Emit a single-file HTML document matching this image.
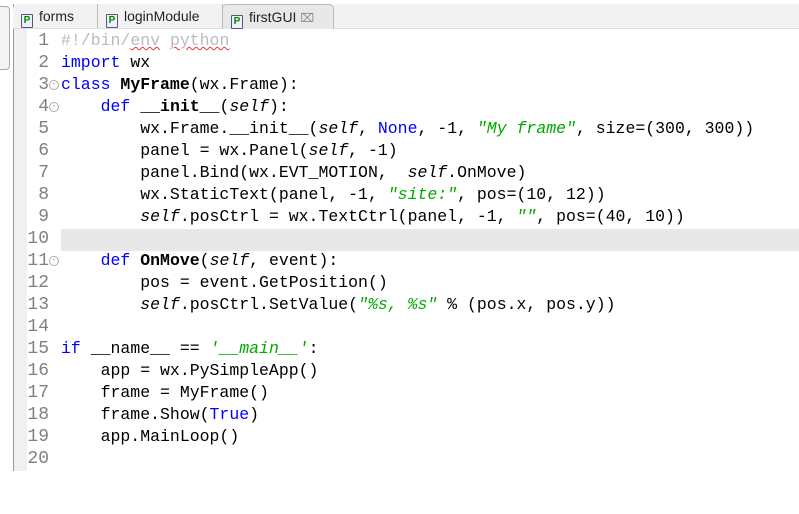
<!DOCTYPE html><html><head><style>
body{margin:0;width:799px;height:471px;background:#fff;overflow:hidden;position:relative;font-family:"Liberation Sans",sans-serif}
.lp{position:absolute;left:-4px;top:6px;width:12px;height:62px;border:1px solid #aaa;border-radius:4px;background:#f4f4f4}
.frame{position:absolute;left:13px;top:4px;right:0;bottom:0;border-left:1px solid #999;background:#fff}
.tabs{position:absolute;left:13px;top:4px;right:0;height:24px;background:#f2f2f2;border-bottom:1px solid #ddd;border-top-left-radius:5px}
.tab{position:absolute;top:0;height:24px;font-size:14px;line-height:25px;color:#222;border-right:1px solid #bbb}
.tab i{display:inline-block;width:10px;height:12px;border:1px solid #557;border-radius:1px;font-style:normal;font-size:10px;line-height:12px;text-align:center;color:#080;font-weight:bold;margin:0 6px 0 8px;vertical-align:-2px;background:#eef}
.act{background:#e8e8e8;border:1px solid #bbb;border-bottom:none;border-radius:5px 5px 0 0}
.gut{position:absolute;left:14px;top:29px;width:13px;bottom:0;background:#f0f0f0}
.code{position:absolute;left:0;top:30px;font-family:"Liberation Mono",monospace;font-size:16.5px;line-height:22px;white-space:pre;color:#000}
.ln{position:absolute;left:26px;width:23px;text-align:right;color:#808080;font-size:18px}
.c{position:absolute;left:61px}
.hl{position:absolute;left:61px;right:0;top:229px;height:22px;background:#e8e8e8}
.k{color:#00f}.b{font-weight:bold}.s{color:#00aa00;font-style:italic}.self{font-style:italic}.cm{color:#bbb}
.sq{text-decoration:underline wavy #e33;text-decoration-thickness:1px}
.f{position:absolute;left:49px;width:8px;height:8px;border:1px solid #aaa;border-radius:50%;font-size:8px;line-height:8px;text-align:center;color:#888}
</style></head><body>
<div class="lp"></div>
<div class="frame"></div>
<div class="tabs">
<div class="tab" style="left:0;width:84px"><i>P</i>forms</div>
<div class="tab" style="left:85px;width:124px"><i>P</i>loginModule</div>
<div class="tab act" style="left:209px;width:110px;top:0"><i>P</i>firstGUI <span style="color:#888;font-size:12px">&#8999;</span></div>
</div>
<div class="gut"></div>
<div class="hl"></div>
<div class="code">
<div class="ln" style="top:0">1</div><div class="c" style="top:0"><span class="cm">#!/bin/<span class="sq">env</span> <span class="sq">python</span></span></div>
<div class="ln" style="top:22px">2</div><div class="c" style="top:22px"><span class="k">import</span> wx</div>
<div class="ln" style="top:44px">3</div><div class="c" style="top:44px"><span class="k">class</span> <span class="b">MyFrame</span>(wx.Frame):</div>
<div class="ln" style="top:66px">4</div><div class="c" style="top:66px">    <span class="k">def</span> <span class="b">__init__</span>(<span class="self">self</span>):</div>
<div class="ln" style="top:88px">5</div><div class="c" style="top:88px">        wx.Frame.__init__(<span class="self">self</span>, <span class="k">None</span>, -1, <span class="s">"My frame"</span>, size=(300, 300))</div>
<div class="ln" style="top:110px">6</div><div class="c" style="top:110px">        panel = wx.Panel(<span class="self">self</span>, -1)</div>
<div class="ln" style="top:132px">7</div><div class="c" style="top:132px">        panel.Bind(wx.EVT_MOTION,  <span class="self">self</span>.OnMove)</div>
<div class="ln" style="top:154px">8</div><div class="c" style="top:154px">        wx.StaticText(panel, -1, <span class="s">"site:"</span>, pos=(10, 12))</div>
<div class="ln" style="top:176px">9</div><div class="c" style="top:176px">        <span class="self">self</span>.posCtrl = wx.TextCtrl(panel, -1, <span class="s">""</span>, pos=(40, 10))</div>
<div class="ln" style="top:198px">10</div>
<div class="ln" style="top:220px">11</div><div class="c" style="top:220px">    <span class="k">def</span> <span class="b">OnMove</span>(<span class="self">self</span>, event):</div>
<div class="ln" style="top:242px">12</div><div class="c" style="top:242px">        pos = event.GetPosition()</div>
<div class="ln" style="top:264px">13</div><div class="c" style="top:264px">        <span class="self">self</span>.posCtrl.SetValue(<span class="s">"%s, %s"</span> % (pos.x, pos.y))</div>
<div class="ln" style="top:286px">14</div>
<div class="ln" style="top:308px">15</div><div class="c" style="top:308px"><span class="k">if</span> __name__ == <span class="s">'__main__'</span>:</div>
<div class="ln" style="top:330px">16</div><div class="c" style="top:330px">    app = wx.PySimpleApp()</div>
<div class="ln" style="top:352px">17</div><div class="c" style="top:352px">    frame = MyFrame()</div>
<div class="ln" style="top:374px">18</div><div class="c" style="top:374px">    frame.Show(<span class="k">True</span>)</div>
<div class="ln" style="top:396px">19</div><div class="c" style="top:396px">    app.MainLoop()</div>
<div class="ln" style="top:418px">20</div>
<div class="f" style="top:50px">-</div><div class="f" style="top:72px">-</div><div class="f" style="top:226px">-</div>
</div>
</body></html>
